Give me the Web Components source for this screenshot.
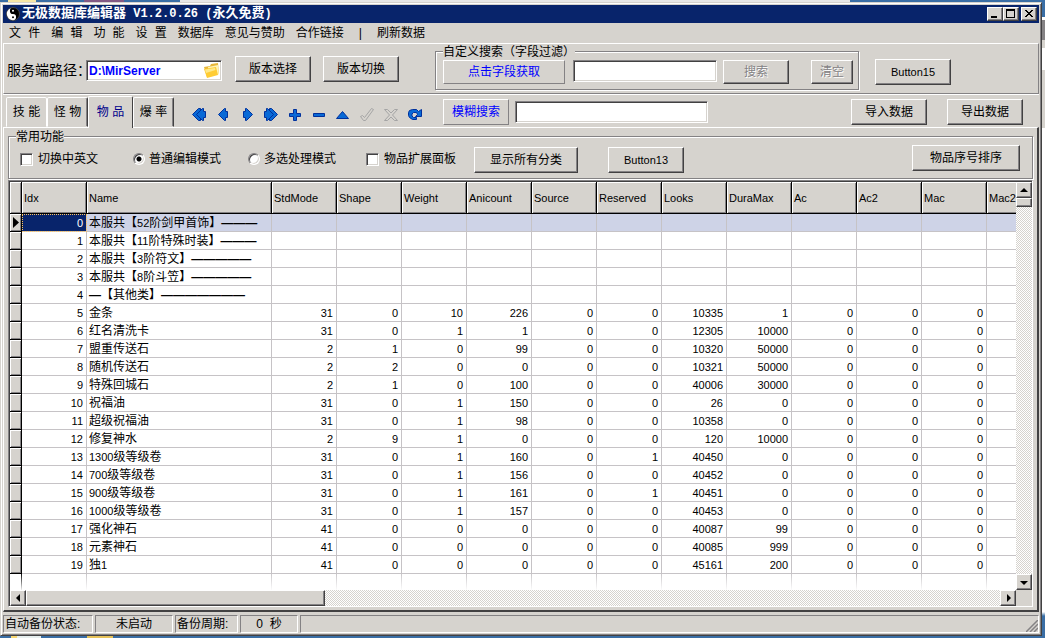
<!DOCTYPE html>
<html lang="zh-CN">
<head>
<meta charset="utf-8">
<title>无极数据库编辑器</title>
<style>
  html { height: 100%; }
  body {
    margin: 0; min-height: 100%; box-sizing: border-box; display: flex;
    padding: 2px 3px 2px 0;
    font: 12px/14px "Liberation Sans", "Noto Sans CJK SC", sans-serif; color: #000;
    --face: #d6d3ce; --lo: #848284; --dark: #424142; --hi: #fff; --navy: #08246b;
    background:
      linear-gradient(90deg, #3a6ea5 0 8px, #f7e7a5 8px 36px, #3a6ea5 36px 84px, #845a84 84px 124px, #3a6ea5 124px 180px, #e7e7e7 180px 850px, #3a6ea5 850px) 0 0 / 100% 2px no-repeat,
      linear-gradient(90deg, #3a6ea5 0 11px, #f7d773 11px 17px, #e7efef 17px 41px, #3a6ea5 41px 87px, #e7c35a 87px 113px, #3a6ea5 113px) 0 100% / 100% 2px no-repeat,
      linear-gradient(#3a6ea5 0 17px, #fff 17px 20px, #848284 20px 40px, #d6d3ce 40px 48px, #fff 48px 70px, #d6d3ce 70px 128px, #fff 128px 612px, #3a6ea5 616px) 100% 0 / 3px 100% no-repeat,
      #3a6ea5;
  }
  app-window { flex: 1; min-width: 0; }
</style>
</head>
<body>
<app-window></app-window>

<script>
const define = (name, html, setup) => {
  const tpl = document.createElement('template');
  tpl.innerHTML = html;
  customElements.define(name, class extends HTMLElement {
    connectedCallback() {
      if (this.shadowRoot) return;
      const root = this.attachShadow({ mode: 'open' });
      root.append(tpl.content.cloneNode(true));
      if (setup) setup(this, root);
    }
  });
};

/* Raised push button; "flat" gives a one-pixel bevel */
define('push-button', `
<style>
  :host { display: block; width: 76px; height: 26px; flex: none; }
  button { width: 100%; height: 100%; box-sizing: border-box; padding: 0; font: inherit; color: inherit; background: var(--face);
    border: 1px solid; border-color: var(--hi) var(--dark) var(--dark) var(--hi); box-shadow: inset -1px -1px var(--lo); white-space: nowrap; }
  :host([flat]) button { border-color: var(--hi) var(--lo) var(--lo) var(--hi); box-shadow: none; color: #00f; }
  :host([latin]) { font-size: 11px; }
  button:disabled { color: var(--lo); text-shadow: 1px 1px #fff; }
</style>
<button type="button"><slot></slot></button>`, (el, root) => {
  root.querySelector('button').disabled = el.hasAttribute('disabled');
});

/* Sunken single-line text box */
define('text-field', `
<style>
  :host { display: block; height: 22px; flex: none; position: relative; }
  input { width: 100%; height: 100%; box-sizing: border-box; margin: 0; padding: 0 2px; outline: 0; border-radius: 0;
    font: inherit; color: inherit; background: #fff; border: 1px solid; border-color: var(--lo) var(--hi) var(--hi) var(--lo);
    box-shadow: inset 1px 1px var(--dark), inset -1px -1px var(--face); display: block; }
  ::slotted(*) { position: absolute; right: 2px; top: 2px; }
</style>
<input type="text"><slot></slot>`, (el, root) => {
  const i = root.querySelector('input');
  i.value = el.getAttribute('value') || '';
  i.setAttribute('aria-label', el.getAttribute('label') || '');
});

/* Tick box or radio with its caption */
define('check-option', `
<style>
  :host { display: block; flex: none; }
  label { display: flex; align-items: center; gap: 5px; white-space: nowrap; }
  :host([type=radio]) label { gap: 4px; }
  input { appearance: none; margin: 0; width: 13px; height: 13px; box-sizing: border-box; background: #fff;
    border: 1px solid; border-color: var(--lo) var(--hi) var(--hi) var(--lo); box-shadow: inset 1px 1px var(--dark), inset -1px -1px var(--face); }
  input[type=radio] { width: 12px; height: 12px; border-radius: 50%; }
  input[type=radio]:checked { background: radial-gradient(circle, #000 0 2px, #fff 3px); }
</style>
<label><input><span><slot></slot></span></label>`, (el, root) => {
  const i = root.querySelector('input');
  i.type = el.getAttribute('type');
  if (i.type === 'radio') i.name = 'mode';
  i.checked = el.hasAttribute('checked');
});

/* Etched frame with a caption set into its top edge */
define('group-box', `
<style>
  :host { display: block; }
  fieldset { margin: 0; min-width: 0; height: 100%; box-sizing: border-box; padding: 0; border: 1px solid var(--lo);
    box-shadow: 1px 1px var(--hi), inset 1px 1px var(--hi); position: relative; }
  legend { position: absolute; top: -7px; left: 7px; padding: 0; background: var(--face); line-height: 14px; white-space: nowrap; }
  div { display: flex; align-items: flex-start; }
</style>
<fieldset><legend></legend><div><slot></slot></div></fieldset>`, (el, root) => {
  root.querySelector('legend').textContent = el.getAttribute('caption');
});

define('title-bar', `
<style>
  :host { display: flex; align-items: center; height: 18px; background: var(--navy); color: #fff; padding: 0 2px 0 3px;
    font: bold 13px/18px "Liberation Mono", "Noto Sans CJK SC", monospace; }
  h1 { flex: 1; margin: 0 0 0 2px; font: inherit; white-space: pre; }
  span { font-size: 12px; }
  svg { display: block; }
  button { width: 16px; height: 14px; box-sizing: border-box; padding: 0; background: var(--face); border: 1px solid;
    border-color: var(--hi) var(--dark) var(--dark) var(--hi); box-shadow: inset -1px -1px var(--lo); }
  button:last-child { margin-left: 2px; }
</style>
<svg width="14" height="14" viewBox="0 0 14 14"><circle cx="7" cy="7" r="6.5" fill="#000" stroke="#444"/><path d="M7 .8A6.2 6.2 0 0 0 7 13.2 3.1 3.1 0 0 0 7 7 3.1 3.1 0 0 1 7 .8z" fill="#fff"/><circle cx="7" cy="3.8" r="1" fill="#fff"/><circle cx="7" cy="10.2" r="1" fill="#000"/></svg>
<h1>无极数据库编辑器<span> V1.2.0.26 (</span>永久免费<span>)</span></h1>
<button type="button" aria-label="最小化"><svg width="14" height="12"><path d="M3 8h6v2H3z"/></svg></button>
<button type="button" aria-label="最大化"><svg width="14" height="12"><path d="M2 1h9v9H2zM3 3v6h7V3z" fill-rule="evenodd"/></svg></button>
<button type="button" aria-label="关闭"><svg width="14" height="12" shape-rendering="crispEdges"><path d="M3 2h2v1h1v1h2V3h1V2h2v1h-1v1H9v1H8v1h1v1h1v1h1v1H9V8H8V7H6v1H5v1H3V8h1V7h1V6h1V5H5V4H4V3H3z"/></svg></button>`);

define('menu-bar', `
<style>
  :host { display: block; height: 20px; }
  nav { display: flex; gap: 11px; padding: 1px 0 0 6px; font: 12px/20px "Liberation Mono", "Noto Sans CJK SC", monospace; }
  a { color: inherit; text-decoration: none; white-space: nowrap; }
  span { margin: 0 2px; }
</style>
<nav><a href="#">文 件</a><a href="#">编 辑</a><a href="#">功 能</a><a href="#">设 置</a><a href="#">数据库</a><a href="#">意见与赞助</a><a href="#">合作链接</a><span>|</span><a href="#">刷新数据</a></nav>`);

define('path-panel', `
<style>
  :host { display: flex; align-items: flex-start; height: 49px; border: 1px solid; border-color: var(--hi) var(--lo) var(--lo) var(--hi); padding-left: 3px; }
  label { font-size: 14px; line-height: 20px; margin-top: 16px; width: 79px; white-space: nowrap; }
  .path { width: 136px; margin-top: 16px; height: 21px; font-weight: bold; color: #00f; }
  .b { margin-top: 12px; }
  group-box { width: 424px; height: 39px; margin: 7px 0 0 36px; }
  .get { width: 122px; height: 24px; margin: 8px 0 0 7px; }
  .find { width: 144px; margin: 8px 0 0 8px; }
  .go { width: 66px; height: 24px; margin: 8px 0 0 6px; }
  .clear { width: 42px; height: 24px; margin: 8px 0 0 22px; }
</style>
<label>服务端路径：</label>
<text-field class="path" label="服务端路径" value="D:\\MirServer"><svg width="17" height="17" viewBox="0 0 17 17"><path d="M1 5l6-1 1-2 7-1 1 11-12 3z" fill="#e7b63a"/><path d="M5 5l10-2 1 9-10 3z" fill="#fff3b5"/><path d="M1 7l12-2 2 8-11 3z" fill="#fc3"/><path d="M2 7.500l10-1.500 .5 2-9.500 3z" fill="#ffe98a"/></svg></text-field>
<push-button class="b" style="margin-left:13px">版本选择</push-button>
<push-button class="b" style="margin-left:12px">版本切换</push-button>
<group-box caption="自定义搜索（字段过滤）">
  <push-button flat class="get">点击字段获取</push-button>
  <text-field class="find" label="搜索内容"></text-field>
  <push-button disabled class="go">搜索</push-button>
  <push-button disabled class="clear">清空</push-button>
</group-box>
<push-button latin style="margin:15px 0 0 16px">Button15</push-button>`);

define('page-tabs', `
<style>
  :host { display: flex; align-items: flex-end; height: 32px; }
  button { height: 30px; width: 41px; box-sizing: border-box; padding: 0; font: inherit; background: var(--face); border: 1px solid;
    border-color: var(--hi) var(--dark) transparent var(--hi); box-shadow: inset -1px 0 var(--lo); border-radius: 2px 2px 0 0; margin-bottom: 1px; white-space: nowrap; }
  button[aria-selected=true] { height: 32px; width: 45px; color: #00008b; margin-bottom: 0; border-bottom: 0; padding-bottom: 2px; box-shadow: none; }
  button:nth-child(2) { border-right-color: var(--hi); box-shadow: none; }
</style>
<button role="tab">技 能</button><button role="tab">怪 物</button><button role="tab" aria-selected="true">物 品</button><button role="tab">爆 率</button>`,
(el, root) => root.querySelectorAll('button').forEach(b => b.type = 'button'));

/* Database navigator: one glyph for each record command */
define('record-nav', `
<style>
  :host { display: flex; }
  button { width: 24px; height: 20px; padding: 0; border: 0; background: none; }
  svg { display: block; margin: 1px auto; overflow: visible; fill: #0869d6; stroke: #00309c; }
  .off { fill: none; stroke: #a5a5a5; }
</style>`, (el, root) => {
  const left = 'M7.500 2.500v3h2v6h-2v3h-1l-6-6 6-6z', right = 'M6.500 2.500v3h-2v6h2v3h1l6-6-6-6z';
  const glyphs = [
    ['首记录', `<path d="M8.500 2.500h-2l-6 6 6 6h2z"/><path d="M10.500 2.500l-6 6 6 6h1v-3h2v-6h-2v-3z"/>`],
    ['上一条', `<path transform="translate(2)" d="${left}"/>`],
    ['下一条', `<path transform="translate(-1)" d="${right}"/>`],
    ['末记录', `<path d="M5.500 2.500h2l6 6-6 6h-2z"/><path d="M3.500 2.500l6 6-6 6h-1v-3h-2v-6h2v-3z"/>`],
    ['插入', `<path d="M5.500 3.500h3v4h4v3h-4v4h-3v-4h-4v-3h4z"/>`],
    ['删除', `<path d="M1.500 7.500h11v3h-11z"/>`],
    ['编辑', `<path d="M.5 12.500l6-7 6 7z"/>`],
    ['提交', `<path d="M.5 10.500l2-1 2 2 7-9 2 1-8 11h-2z"/>`, 1],
    ['取消', `<path d="M.5 3.500h3l3.500 3.500 3.500-3.500h3l-5 5.500 5 5.500h-3l-3.500-3.500-3.500 3.500h-3l5-5.500z"/>`, 1],
    ['刷新', `<path d="M4.500 3.500h4l2 2 3-2v7h-6l2-2-1-2h-3l-1.500 1.500v2l1.500 1.500h3v2h-4l-3-2-1-2v-3l1-2z"/>`]
  ];
  for (const [name, shape, off] of glyphs)
    root.innerHTML += `<button type="button" title="${name}"><svg class="${off ? 'off' : ''}" width="14" height="17">${shape}</svg></button>`;
});

define('tool-row', `
<style>
  :host { display: flex; align-items: flex-start; border-top: 1px solid var(--hi); height: 32px; padding: 0 16px 0 3px; position: relative; }
  page-tabs { position: relative; z-index: 1; margin-top: 1px; }
  record-nav { margin: 9px 16px 0 13px; }
  .fuzzy { width: 66px; margin-top: 4px; }
  .q { width: 193px; margin: 6px 0 0 6px; }
  .r { margin-top: 4px; }
  i { flex: 1; }
</style>
<page-tabs></page-tabs><record-nav></record-nav>
<push-button flat class="fuzzy">模糊搜索</push-button>
<text-field class="q" label="模糊搜索"></text-field><i></i>
<push-button class="r">导入数据</push-button>
<push-button class="r" style="margin-left:20px">导出数据</push-button>`);

define('common-tools', `
<style>
  :host { display: block; padding: 8px 4px 0; }
  group-box { height: 43px; }
  check-option { margin-top: 15px; }
  .sort { width: 108px; margin-top: 8px; position: absolute; right: 12px; top: 0; }
</style>
<group-box caption="常用功能">
  <check-option type="checkbox" style="margin-left:11px">切换中英文</check-option>
  <check-option type="radio" checked style="margin-left:35px">普通编辑模式</check-option>
  <check-option type="radio" style="margin-left:27px">多选处理模式</check-option>
  <check-option type="checkbox" style="margin-left:30px">物品扩展面板</check-option>
  <push-button style="width:104px;margin:10px 0 0 18px">显示所有分类</push-button>
  <push-button latin style="margin:10px 0 0 30px">Button13</push-button>
  <push-button class="sort">物品序号排序</push-button>
</group-box>`);

define('scroll-bar', `
<style>
  :host { display: flex; height: 16px; background: repeating-conic-gradient(#fff 0 25%, var(--face) 0 50%) 0 0 / 2px 2px; }
  :host([vertical]) { flex-direction: column; height: auto; width: 16px; }
  button, div { flex: none; width: 16px; height: 16px; padding: 0; box-sizing: border-box; background: var(--face); border: 1px solid;
    border-color: var(--hi) var(--dark) var(--dark) var(--hi); box-shadow: inset -1px -1px var(--lo); }
  div { width: 299px; }
  :host([vertical]) div { width: 16px; height: 9px; }
  i { flex: 1; }
  svg { display: block; margin: auto; }
</style>
<button type="button" aria-label="向前滚动"><svg width="9" height="9"></svg></button><div></div><i></i>
<button type="button" aria-label="向后滚动"><svg width="9" height="9"></svg></button>`, (el, root) => {
  const [a, b] = root.querySelectorAll('svg');
  const v = el.hasAttribute('vertical');
  a.innerHTML = `<path d="${v ? 'M4 2l4 4H0z' : 'M2 4l4-4v8z'}"/>`;
  b.innerHTML = `<path d="${v ? 'M4 7l4-4H0z' : 'M7 4L3 0v8z'}"/>`;
});

define('data-grid', `
<style>
  :host { display: block; flex: 1; min-height: 0; margin: 1px 4px 3px; border: 1px solid; border-color: var(--lo) var(--hi) var(--hi) var(--lo); }
  .in { height: 100%; box-sizing: border-box; display: grid; grid-template: minmax(0, 1fr) 16px / minmax(0, 1fr) 16px; border: solid var(--dark); border-width: 1px 0 0 1px; background: var(--face); }
  .view { overflow: hidden; background: #fff; }
  table { border-collapse: separate; border-spacing: 0; table-layout: fixed; width: 1042px; font-size: 11px; }
  th, td { box-sizing: border-box; padding: 0 3px 0 2px; overflow: hidden; white-space: nowrap; font-weight: normal; }
  th { height: 32px; text-align: left; background: var(--face); border: solid #000; border-width: 0 1px 1px 0; box-shadow: inset 1px 1px #fff, inset -1px -1px var(--lo); }
  td { height: 18px; line-height: 16px; padding-top: 1px; text-align: right; border: solid #c6c3c6; border-width: 0 1px 1px 0; }
  td.name { text-align: left; font-size: 12px; }
  .name span { font-size: 11px; }
  td.ind { background: var(--face); border-color: #000; padding: 0; box-shadow: inset 1px 1px #fff, inset -1px -1px var(--lo); }
  .ind svg { display: block; margin-left: 2px; }
  tr.cur td:not(.ind) { background: #ced3e7; }
  tr.cur td.idx { background: var(--navy); color: #fff; outline: 1px dotted #ffc663; outline-offset: -1px; }
  tr.rest td { height: 16px; padding: 0; background: #fff; box-shadow: none; border-image: linear-gradient(#c6c3c6, #fff) 1; border-width: 0 1px 0 0; }
  tr.rest td.ind { border-image: linear-gradient(#000, #fff) 1; }
</style>
<div class="in"><div class="view"><table><colgroup></colgroup><thead></thead><tbody></tbody></table></div>
<scroll-bar vertical></scroll-bar><scroll-bar></scroll-bar></div>`, (el, root) => {
  const heads = ['Idx', 'Name', 'StdMode', 'Shape', 'Weight', 'Anicount', 'Source', 'Reserved', 'Looks', 'DuraMax', 'Ac', 'Ac2', 'Mac', 'Mac2'];
  const rows = `本服共【52阶剑甲首饰】———
本服共【11阶特殊时装】———
本服共【3阶符文】—————
本服共【8阶斗笠】—————
—【其他类】———————
金条,31,0,10,226,0,0,10335,1
红名清洗卡,31,0,1,1,0,0,12305,10000
盟重传送石,2,1,0,99,0,0,10320,50000
随机传送石,2,2,0,0,0,0,10321,50000
特殊回城石,2,1,0,100,0,0,40006,30000
祝福油,31,0,1,150,0,0,26,0
超级祝福油,31,0,1,98,0,0,10358,0
修复神水,2,9,1,0,0,0,120,10000
1300级等级卷,31,0,1,160,0,1,40450,0
700级等级卷,31,0,1,156,0,0,40452,0
900级等级卷,31,0,1,161,0,1,40451,0
1000级等级卷,31,0,1,157,0,0,40453,0
强化神石,41,0,0,0,0,0,40087,99
元素神石,41,0,0,0,0,0,40085,999
独1,41,0,0,0,0,0,45161,200`.split('\n');
  const q = s => root.querySelector(s);
  q('colgroup').innerHTML = [12, 65, 185, ...Array(12).fill(65)].map(w => `<col style="width:${w}px">`).join('');
  q('thead').innerHTML = '<tr><th></th>' + heads.map(h => `<th scope="col">${h}</th>`).join('') + '</tr>';
  q('tbody').innerHTML = rows.map((r, i) => {
    const [name, ...v] = r.split(',');
    const nums = v.length ? [...v, 0, 0, 0, ''] : Array(12).fill('');
    return `<tr class="${i ? '' : 'cur'}"><td class="ind">${i ? '' : '<svg width="7" height="11"><path d="M1 0l6 5.500L1 11z"/></svg>'}</td><td class="idx">${i}</td><td class="name">${name.replace(/\d+/g, '<span>$&</span>').replace(/—+/g, '<b>$&</b>')}</td>${nums.map(n => `<td>${n}</td>`).join('')}</tr>`;
  }).join('') + `<tr class="rest"><td class="ind"></td>${'<td></td>'.repeat(14)}</tr>`;
});

define('status-bar', `
<style>
  :host { display: flex; gap: 2px; height: 18px; margin-top: 3px; position: relative; }
  div { box-sizing: border-box; border: 1px solid; border-color: var(--lo) var(--hi) var(--hi) var(--lo); line-height: 16px; text-align: center; white-space: pre; }
  .l { text-align: left; padding-left: 1px; }
  svg { position: absolute; right: 1px; bottom: 1px; background: var(--face); }
</style>
<div class="l" style="width:90px">自动备份状态:</div><div style="width:78px">未启动</div><div class="l" style="width:63px">备份周期:</div><div style="width:58px">0  秒</div><div style="flex:1"></div>
<svg width="12" height="12" fill="none" stroke="#848284" stroke-width="1.500"><path d="M0 12L12 0M4 12l8-8M8 12l4-4"/></svg>`);

define('app-window', `
<style>
  :host { display: flex; flex-direction: column; box-sizing: border-box; background: var(--face); border: 1px solid;
    border-color: var(--face) var(--dark) var(--dark) var(--face); padding: 2px; box-shadow: inset 1px 1px var(--hi), inset -1px -1px var(--lo); }
  .page { flex: 1; min-height: 0; display: flex; flex-direction: column; border: solid; border-width: 1px 2px 2px 1px; border-color: var(--hi) var(--dark) var(--dark) var(--hi); }
</style>
<title-bar></title-bar><menu-bar></menu-bar><path-panel></path-panel><tool-row></tool-row>
<div class="page"><common-tools></common-tools><data-grid></data-grid></div>
<status-bar></status-bar>`);
</script>
</body>
</html>
